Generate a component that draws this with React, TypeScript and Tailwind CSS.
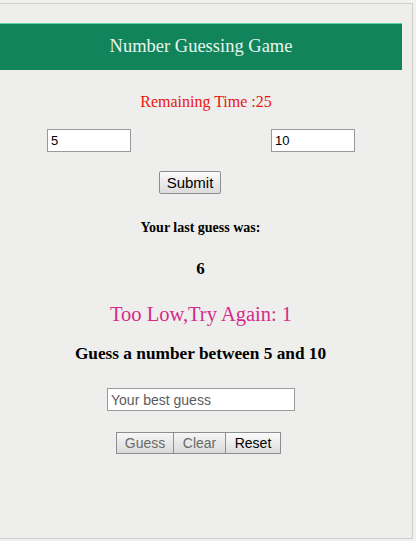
export default function App() {
  return (
    <div className="w-[416px] h-[541px] bg-[#f2f1f0] pt-[3px]">
      <div className="w-[413px] h-[536px] bg-[#eeeeed] border-t border-r border-b border-[#cfcfcf] font-['Liberation_Serif',serif]">
        <div className="w-[402px] mt-[19px] h-[47px] bg-[#11845b] border-t border-[#5fd3a8] flex items-center justify-center text-[18.5px] text-[#e6f6ee]">
          Number Guessing Game
        </div>

        <div className="w-[402px] flex flex-col items-center">
          <div className="mt-[22px] ml-[10px] text-[16px] leading-5 text-[#e8160c]">Remaining Time :25</div>

          <div className="mt-[17px] w-full flex justify-between px-[47px]">
            <input
              defaultValue="5"
              className="w-[84px] h-[23px] bg-white border border-[#9a9a9a] px-[3px] text-[13px] text-black font-['Liberation_Sans',sans-serif] outline-none"
            />
            <input
              defaultValue="10"
              className="w-[84px] h-[23px] bg-white border border-[#9a9a9a] px-[3px] text-[13px] text-black font-['Liberation_Sans',sans-serif] outline-none"
            />
          </div>

          <button className="mt-[19px] h-[23px] w-[62px] ml-[-22px] border border-[#8e8e8e] rounded-[2px] bg-gradient-to-b from-[#fbfbfb] to-[#dcdcdc] text-[15px] text-black font-['Liberation_Sans',sans-serif]">
            Submit
          </button>

          <div className="mt-[24px] ml-[-1px] text-[14px] font-bold text-black leading-5">Your last guess was:</div>

          <div className="mt-[21px] ml-[-1px] text-[17px] font-bold text-black leading-5">6</div>

          <div className="mt-[23px] ml-[0px] text-[20.5px] leading-6 text-[#d42b8c]">Too Low,Try Again: 1</div>

          <div className="mt-[18px] ml-[-1px] text-[17.3px] font-bold text-black leading-5">Guess a number between 5 and 10</div>

          <input
            placeholder="Your best guess"
            className="mt-[24px] w-[188px] h-[23px] bg-white border border-[#9a9a9a] px-[3px] text-[14px] text-black placeholder:text-[#5c5c5c] font-['Liberation_Sans',sans-serif] outline-none ml-[0px]"
          />

          <div className="mt-[21px] flex font-['Liberation_Sans',sans-serif] text-[14px] ml-[-5px]">
            <button className="h-[22px] w-[58px] border border-[#8e8e8e] bg-gradient-to-b from-[#f6f6f6] to-[#dadada] text-[#6a6a6a]">
              Guess
            </button>
            <button className="h-[22px] w-[52px] border border-l-0 border-[#8e8e8e] bg-gradient-to-b from-[#f6f6f6] to-[#dadada] text-[#6a6a6a]">
              Clear
            </button>
            <button className="h-[22px] w-[55px] border border-l-0 border-[#8e8e8e] bg-gradient-to-b from-[#fbfbfb] to-[#dcdcdc] text-black">
              Reset
            </button>
          </div>
        </div>
      </div>
    </div>
  );
}
